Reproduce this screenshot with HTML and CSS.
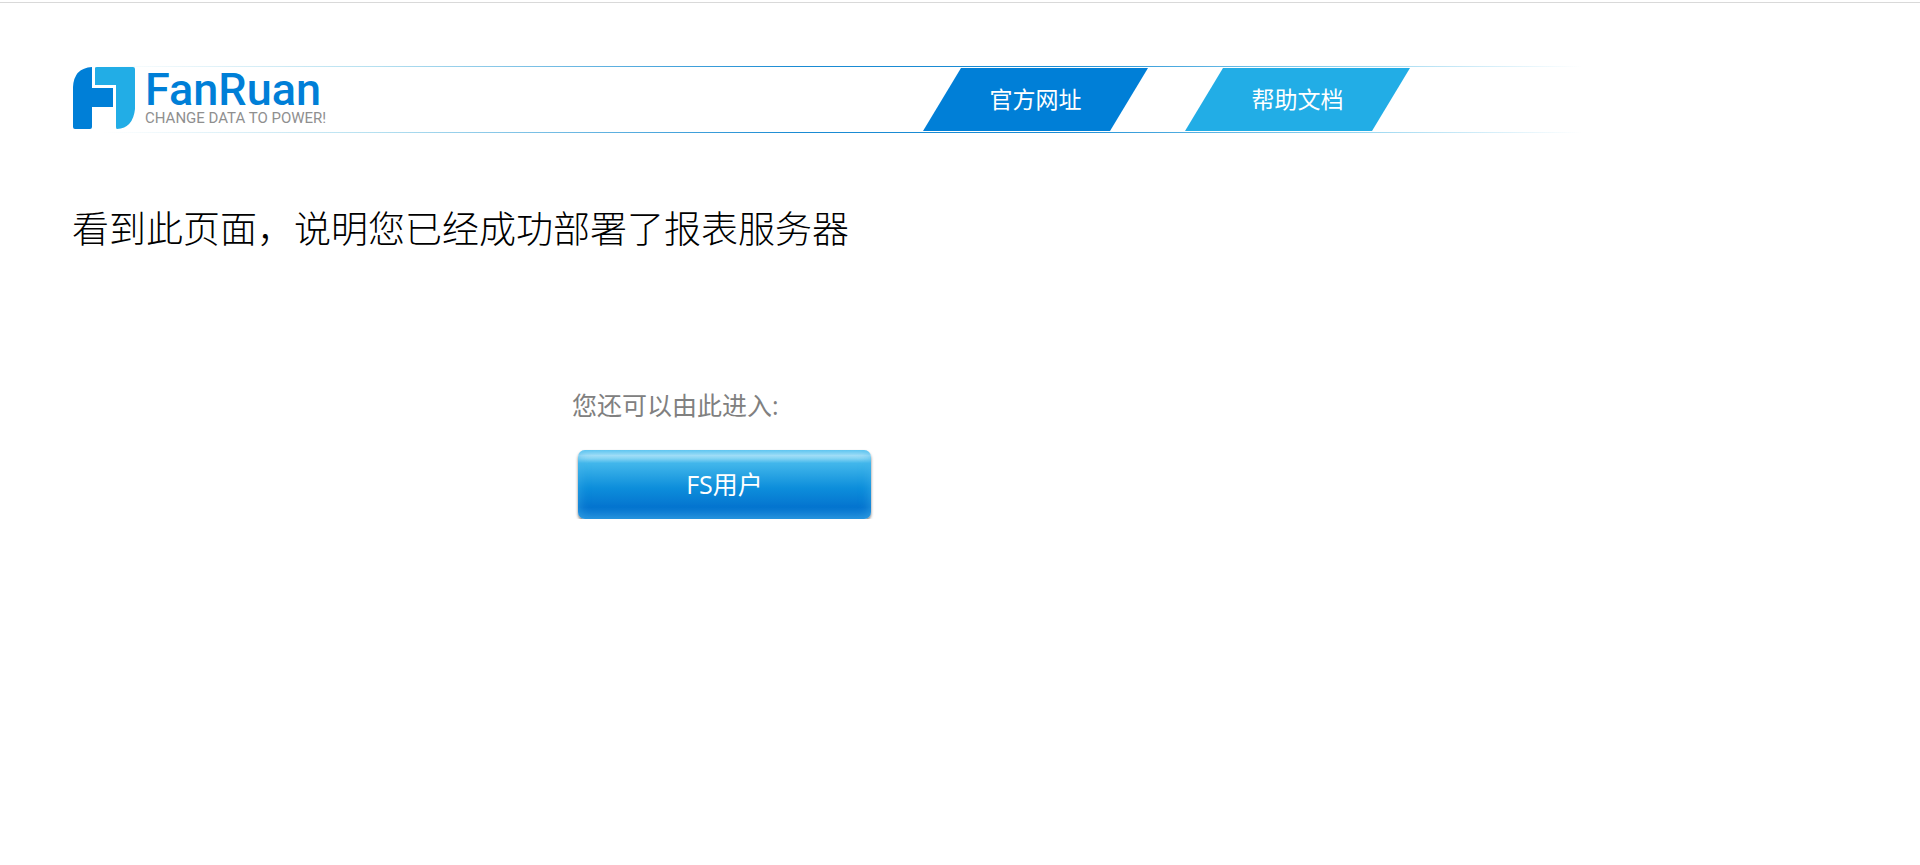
FILE: index.html
```html
<!DOCTYPE html>
<html lang="zh-CN">
<head>
  <meta charset="UTF-8" />
  <meta name="viewport" content="width=device-width, initial-scale=1.0"/>
  <title>FanRuan</title>
  <link rel="stylesheet" href="styles.css">
</head>
<body>

  <div class="header">
    <a class="logo" href="#">
      <svg class="logo-mark" viewBox="0 0 62 63" aria-hidden="true">
        <path fill="#007fd7" d="M19 1V22H40V41H19V61Q19 63 17 63H2Q0 63 0 61V21Q1 2 19 1Z"/>
        <path fill="#22ade6" d="M22 2Q22 1 24 1H60Q62 1 62 3V43Q60 62 44 63Q43 63 43 61V19H22Z"/>
      </svg>
      <span class="logo-text">
        <span class="logo-name">FanRuan</span>
        <span class="logo-slogan">CHANGE DATA TO POWER!</span>
      </span>
    </a>
    <div class="nav">
      <a class="tab site" href="#">官方网址</a>
      <a class="tab docs" href="#">帮助文档</a>
    </div>
  </div>

  <h1>看到此页面，说明您已经成功部署了报表服务器</h1>

  <div class="entry">
    <p>您还可以由此进入:</p>
    <button type="button">FS用户</button>
  </div>

</body>
</html>
```

FILE: styles.css
```css
* {
  box-sizing: border-box;
}

body {
  margin: 2px 0 0;
  padding: 63px 72px 0;
  border-top: 1px solid #d9d9d9;
  background-color: white;
  font-family: "Open Sans", "Noto Sans CJK SC", sans-serif;
}

a {
  text-decoration: none;
}

/* top and bottom rules fade out at both ends */
.header {
  display: flex;
  justify-content: space-between;
  align-items: center;
  max-width: 1510px;
  height: 67px;
  padding-right: 172px;
  background-image:
    linear-gradient(to right, transparent 2%, #b5e0f0 20%, #1a8bd3 48%, #1a8bd3 65%, #8ad0ee 83%, transparent),
    linear-gradient(to right, transparent 2%, #b5e0f0 20%, #1a8bd3 48%, #1a8bd3 65%, #8ad0ee 83%, transparent);
  background-size: 100% 1px;
  background-position: top, bottom;
  background-repeat: no-repeat;
}

.logo {
  display: flex;
  align-items: center;
  gap: 10px;
  padding: 0 0 4px 1px;
}

.logo-mark {
  width: 62px;
  height: 63px;
}

.logo-text {
  display: flex;
  flex-direction: column;
  font-family: Roboto, sans-serif;
}

.logo-name {
  color: #007fd7;
  font-size: 45px;
  font-weight: 500;
  line-height: 40px;
}

.logo-slogan {
  color: #8f8f8f;
  font-size: 15px;
  line-height: 16px;
}

.nav {
  display: flex;
  gap: 37px;
}

.tab {
  width: 225px;
  height: 63px;
  color: white;
  font-size: 23px;
  line-height: 63px;
  text-align: center;
  clip-path: polygon(38px 0, 100% 0, 187px 100%, 0 100%);
}

.site {
  background-color: #007fd7;
}

.docs {
  background-color: #22ade6;
}

h1 {
  margin: 66px 0 0;
  font-family: "Noto Sans CJK SC", sans-serif;
  font-size: 37px;
  font-weight: 300;
  line-height: 56px;
}

.entry {
  margin: 132px 0 0 500px;
}

.entry p {
  margin: 0;
  color: gray;
  font-size: 25px;
  line-height: 36px;
}

.entry button {
  display: block;
  width: 293px;
  height: 69px;
  margin: 27px 0 0 6px;
  padding: 0 0 4px;
  border: none;
  border-radius: 7px;
  background: linear-gradient(#6bcdf3, #a9e1f8 8%, #8ad6f4 12%, #42b7eb 19%, #0d8edb 55%, #0474cf 83%, #1a86d8);
  box-shadow: 0 2px 3px rgba(0, 0, 0, 0.5), inset 0 0 12px rgba(70, 180, 235, 0.6);
  color: white;
  font-family: inherit;
  font-size: 25px;
  cursor: pointer;
}
```
